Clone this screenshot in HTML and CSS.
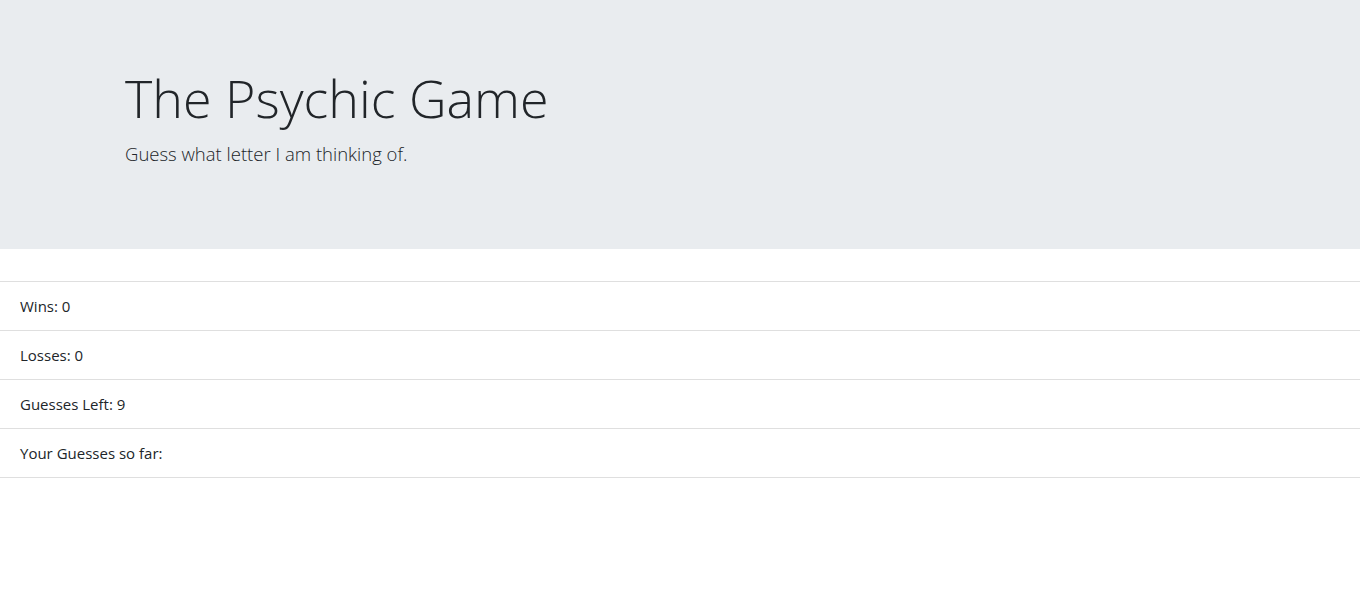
FILE: index.html
```html
<!DOCTYPE html>
<html lang="en">
<head>
<meta charset="utf-8">
<title>The Psychic Game</title>
<link rel="stylesheet" href="styles.css">
</head>
<body>
<div class="jumbotron">
  <div class="container">
    <h1 class="display-4">The Psychic Game</h1>
    <p class="lead">Guess what letter I am thinking of.</p>
  </div>
</div>
<ul class="list-group">
  <li class="list-group-item">Wins: 0</li>
  <li class="list-group-item">Losses: 0</li>
  <li class="list-group-item">Guesses Left: 9</li>
  <li class="list-group-item">Your Guesses so far:</li>
</ul>
</body>
</html>
```
FILE: styles.css
```css
* { box-sizing: border-box; }
html, body { margin: 0; padding: 0; }
body {
  font-family: "Open Sans", "Noto Sans", "Liberation Sans", sans-serif;
  font-size: 16px;
  line-height: 1.5;
  color: #212529;
  background: #fff;
}
.jumbotron {
  background: #e9ecef;
  padding: 64px 32px;
  margin-bottom: 32px;
}
.container {
  width: 1140px;
  max-width: 100%;
  margin: 0 auto;
  padding: 0 15px;
  display: flex;
  flex-direction: column;
}
.display-4 {
  margin: 0 0 8px;
  font-size: 52px;
  font-weight: 300;
  line-height: 67px;
  letter-spacing: 0;
}
.lead {
  margin: 0 0 16px;
  font-size: 18.5px;
  font-weight: 300;
  line-height: 30px;
}
.list-group {
  list-style: none;
  margin: 0;
  padding: 0;
  display: flex;
  flex-direction: column;
}
.list-group-item {
  padding: 12px 20px;
  border-top: 1px solid rgba(0,0,0,.125);
  font-size: 15px;
  line-height: 24px;
}
.list-group-item:last-child {
  border-bottom: 1px solid rgba(0,0,0,.125);
}
```
